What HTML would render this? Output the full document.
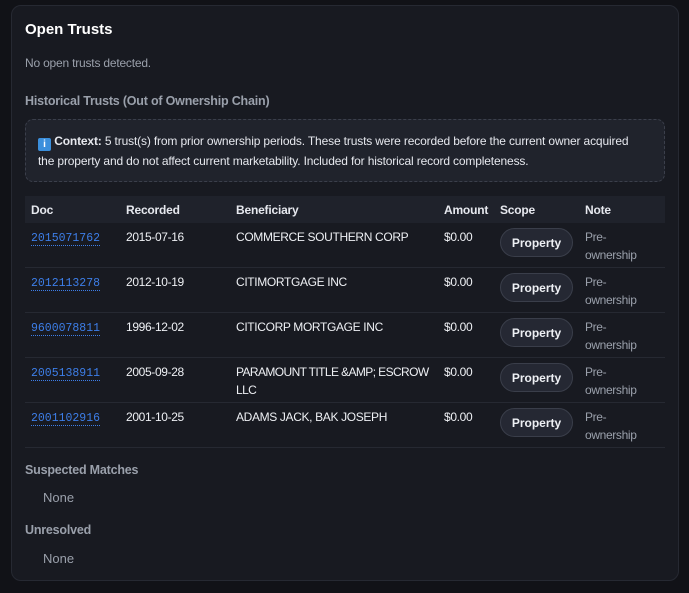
<!DOCTYPE html>
<html><head><meta charset="utf-8"><style>
*{margin:0;padding:0;box-sizing:border-box}
body{width:689px;height:593px;background:#111217;font-family:"Liberation Sans",sans-serif;color:#e6e8ee;overflow:hidden;position:relative}
.card{position:absolute;left:11px;top:5px;width:668px;height:576px;background:#181a21;border:1px solid #262932;border-radius:10px}
.abs{position:absolute;white-space:nowrap}
h1{font-size:15px;font-weight:bold;color:#fff}
.muted{color:#9aa0ab;font-size:12px;letter-spacing:-0.2px}
.sub{color:#9aa0ab;font-size:12.5px;font-weight:bold;letter-spacing:-0.2px}
.ctx{position:absolute;left:25px;top:119px;width:640px;height:63px;background:#20232c;border:1px dashed #3b3f4b;border-radius:8px;font-size:12px;line-height:20px;padding:11px 12px;color:#e6e8ee;letter-spacing:-0.15px}
.ico{display:inline-block;width:13px;height:13px;background:#3b8fdc;border-radius:2px;color:#fff;font-size:10px;line-height:13px;text-align:center;font-weight:bold;vertical-align:-2px}
.thead{position:absolute;left:25px;top:196px;width:640px;height:27px;background:#1f222b}
.th{position:absolute;top:203px;font-size:12px;font-weight:bold;color:#e6e8ee;letter-spacing:-0.2px}
.row{position:absolute;left:25px;width:640px;height:45px;border-bottom:1px solid #262932}
.td{position:absolute;font-size:12px;line-height:18px;color:#eef0f4;letter-spacing:-0.35px;white-space:nowrap}
.doc{color:#3d7ee8;font-family:"Liberation Mono",monospace;font-size:11.5px;letter-spacing:0;border-bottom:1px dotted #3d7ee8}
.btn{position:absolute;left:475px;top:5px;width:73px;height:29px;border-radius:15px;background:#252833;border:1px solid #3a3e4a;font-size:12px;font-weight:bold;text-align:center;line-height:29px;color:#eef0f4}
.note{color:#9aa0ab}
</style></head><body>
<div class="card"></div>
<h1 class="abs" style="left:25px;top:21px">Open Trusts</h1>
<div class="abs muted" style="left:25px;top:56px">No open trusts detected.</div>
<div class="abs sub" style="left:25px;top:94px">Historical Trusts (Out of Ownership Chain)</div>
<div class="ctx"><span class="ico">i</span> <b>Context:</b> 5 trust(s) from prior ownership periods. These trusts were recorded before the current owner acquired<br>the property and do not affect current marketability. Included for historical record completeness.</div>
<div class="thead"></div>
<div class="th" style="left:31px">Doc</div>
<div class="th" style="left:126px">Recorded</div>
<div class="th" style="left:236px">Beneficiary</div>
<div class="th" style="left:444px">Amount</div>
<div class="th" style="left:500px">Scope</div>
<div class="th" style="left:585px">Note</div>

<div class="row" style="top:223px">
<div class="td" style="left:6px;top:5px"><span class="doc">2015071762</span></div>
<div class="td" style="left:101px;top:5px">2015-07-16</div>
<div class="td" style="left:211px;top:5px">COMMERCE SOUTHERN CORP</div>
<div class="td" style="left:419px;top:5px">$0.00</div>
<div class="btn">Property</div>
<div class="td note" style="left:560px;top:5px">Pre-<br>ownership</div>
</div>
<div class="row" style="top:268px">
<div class="td" style="left:6px;top:5px"><span class="doc">2012113278</span></div>
<div class="td" style="left:101px;top:5px">2012-10-19</div>
<div class="td" style="left:211px;top:5px">CITIMORTGAGE INC</div>
<div class="td" style="left:419px;top:5px">$0.00</div>
<div class="btn">Property</div>
<div class="td note" style="left:560px;top:5px">Pre-<br>ownership</div>
</div>
<div class="row" style="top:313px">
<div class="td" style="left:6px;top:5px"><span class="doc">9600078811</span></div>
<div class="td" style="left:101px;top:5px">1996-12-02</div>
<div class="td" style="left:211px;top:5px">CITICORP MORTGAGE INC</div>
<div class="td" style="left:419px;top:5px">$0.00</div>
<div class="btn">Property</div>
<div class="td note" style="left:560px;top:5px">Pre-<br>ownership</div>
</div>
<div class="row" style="top:358px">
<div class="td" style="left:6px;top:5px"><span class="doc">2005138911</span></div>
<div class="td" style="left:101px;top:5px">2005-09-28</div>
<div class="td" style="left:211px;top:5px;letter-spacing:-0.6px">PARAMOUNT TITLE &amp;AMP; ESCROW<br>LLC</div>
<div class="td" style="left:419px;top:5px">$0.00</div>
<div class="btn">Property</div>
<div class="td note" style="left:560px;top:5px">Pre-<br>ownership</div>
</div>
<div class="row" style="top:403px">
<div class="td" style="left:6px;top:5px"><span class="doc">2001102916</span></div>
<div class="td" style="left:101px;top:5px">2001-10-25</div>
<div class="td" style="left:211px;top:5px">ADAMS JACK, BAK JOSEPH</div>
<div class="td" style="left:419px;top:5px">$0.00</div>
<div class="btn">Property</div>
<div class="td note" style="left:560px;top:5px">Pre-<br>ownership</div>
</div>

<div class="abs sub" style="left:25px;top:463px">Suspected Matches</div>
<div class="abs" style="left:43px;top:490px;font-size:13px;color:#9aa0ab">None</div>
<div class="abs sub" style="left:25px;top:523px">Unresolved</div>
<div class="abs" style="left:43px;top:551px;font-size:13px;color:#9aa0ab">None</div>
</body></html>
